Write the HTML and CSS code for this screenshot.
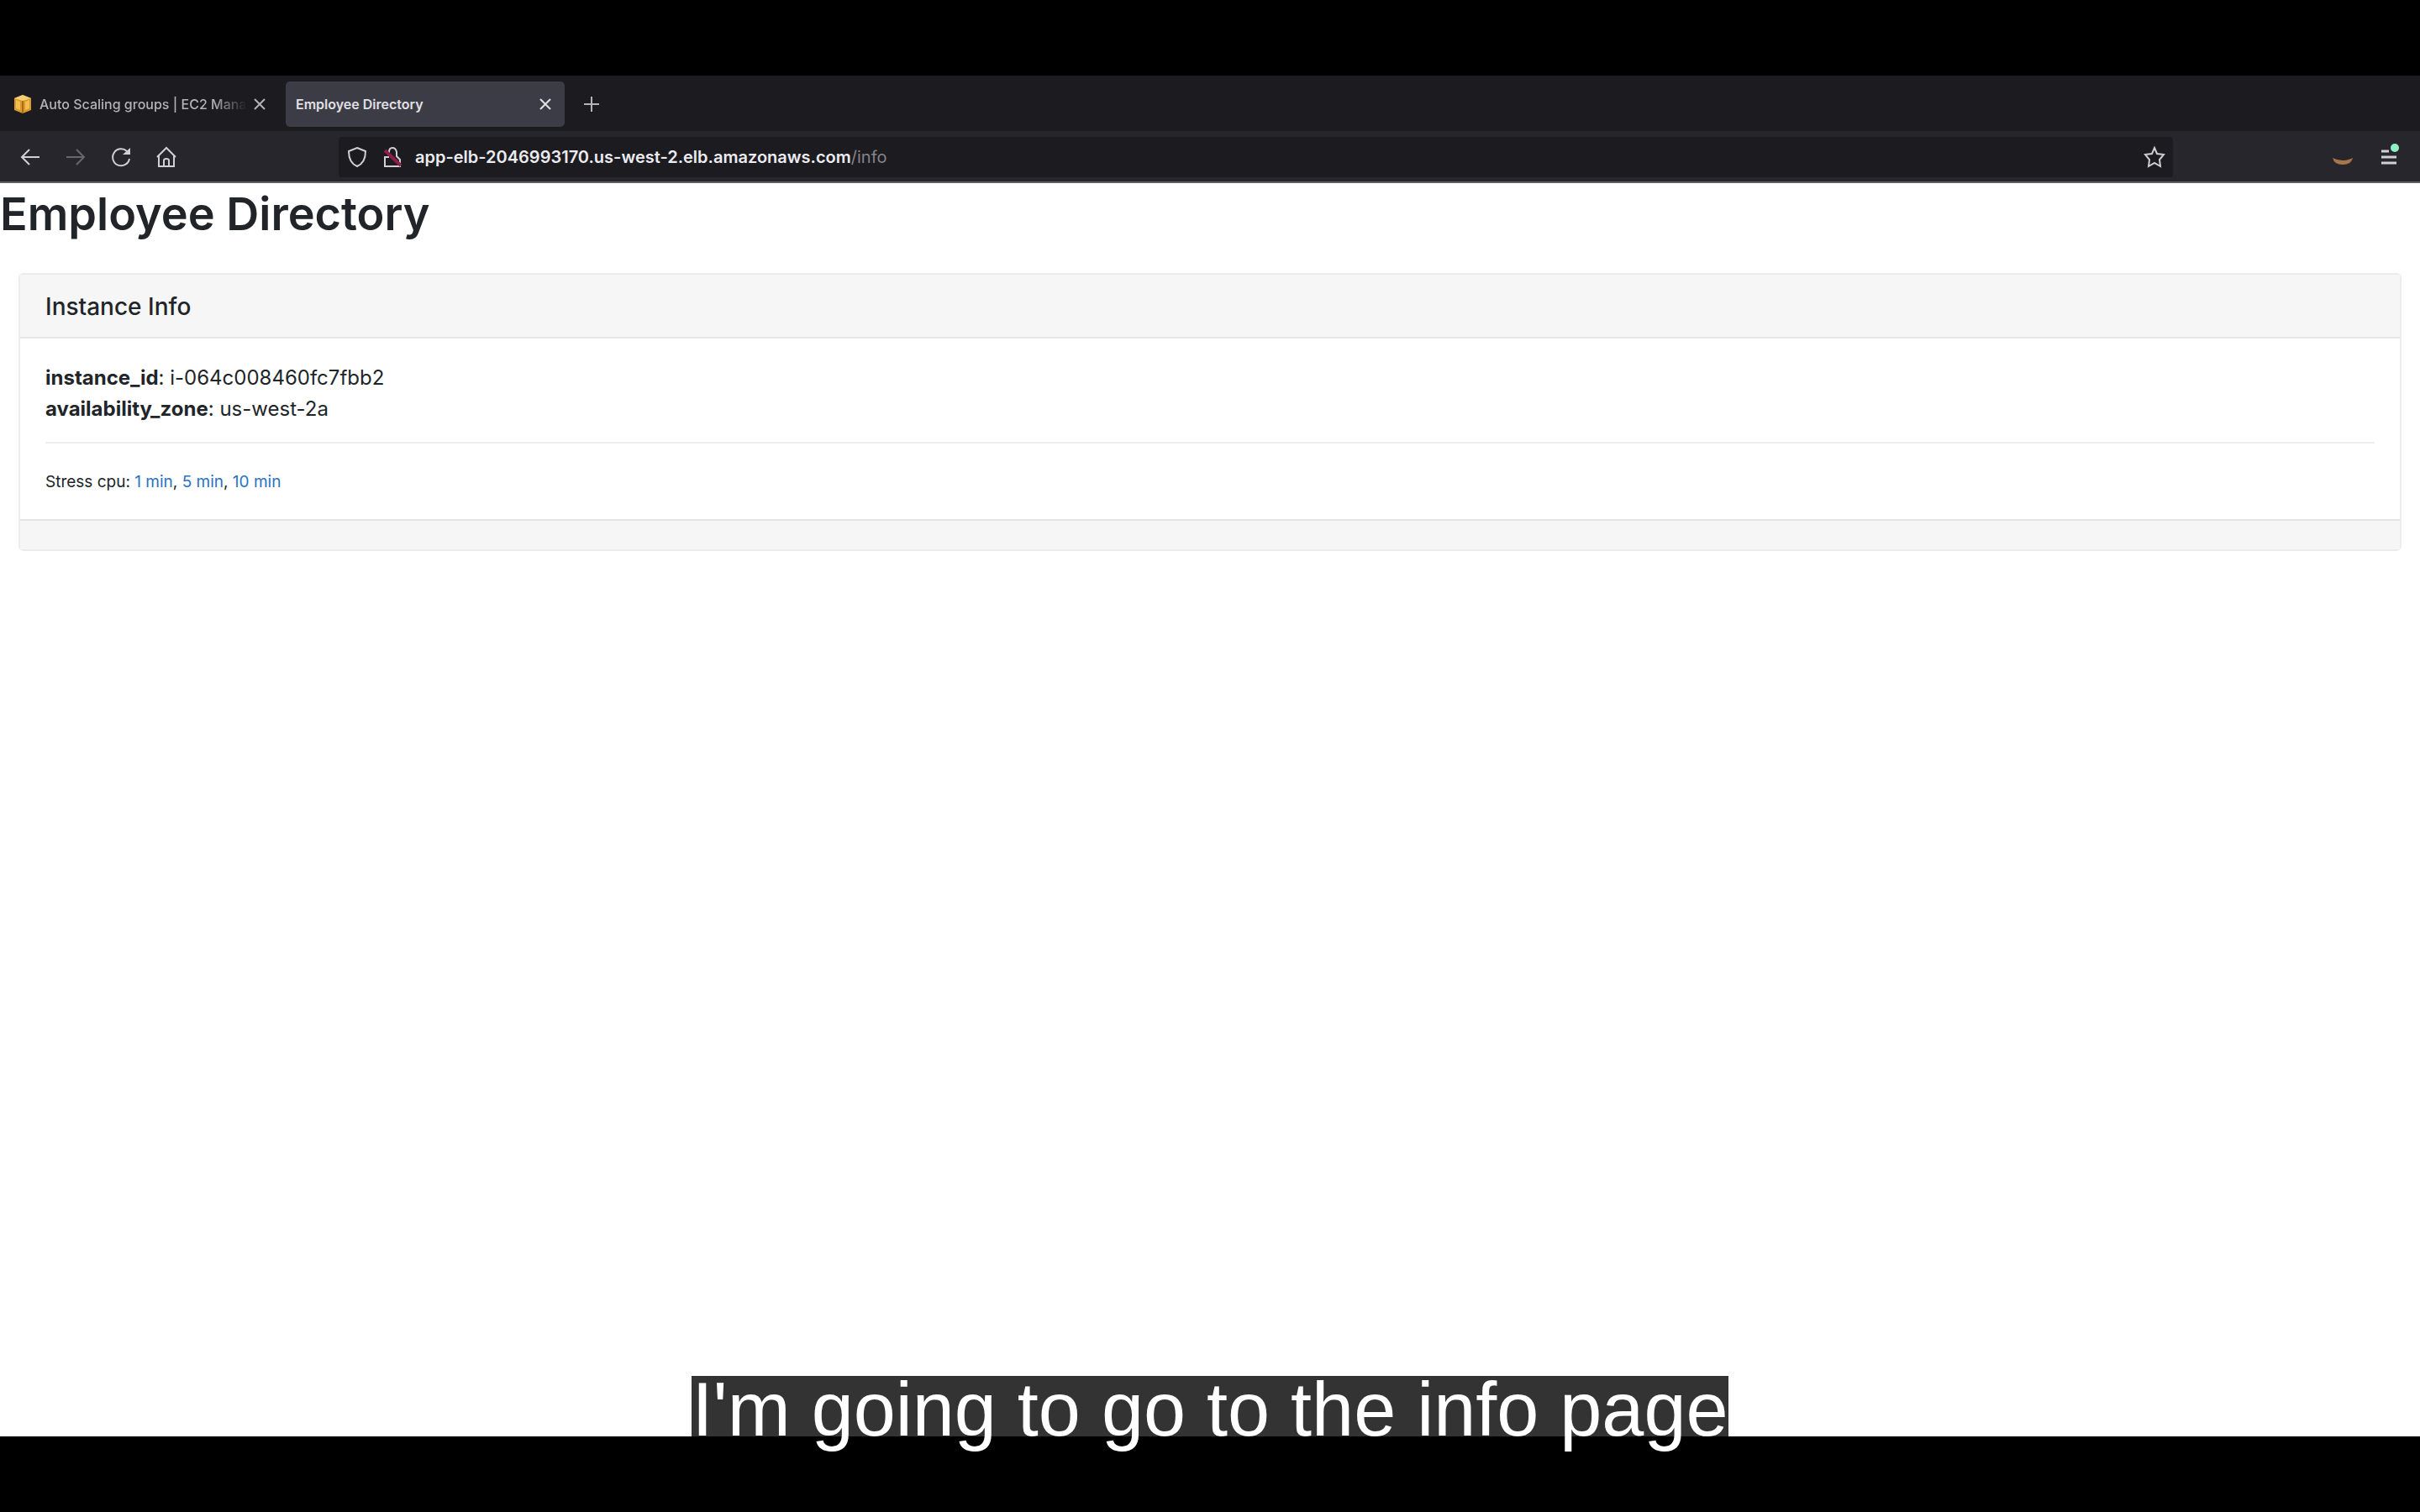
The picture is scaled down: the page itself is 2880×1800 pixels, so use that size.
FILE: index.html
```html
<!DOCTYPE html>
<html lang="en">
<head>
<meta charset="utf-8">
<title>Employee Directory</title>
<link rel="stylesheet" href="styles.css">
</head>
<body>
<div class="browser">
  <nav class="tabs" aria-label="Tabs">
    <div class="tab">
      <svg class="favicon" viewBox="0 0 24 24" aria-hidden="true"><path d="M12 1l10 4v14l-10 4-10-4V5z" fill="#d99a2b"/><path d="M12 1l10 4-10 3L2 5z" fill="#f6cf73"/><path d="M4 7l5 2v10l-5-2zM20 7l-5 2v10l5-2z" fill="#f3bd50"/><path d="M12 8v15" stroke="#a96d14" stroke-width="2"/></svg>
      <span class="tab-title">Auto Scaling groups | EC2 Mana</span>
      <button class="close" aria-label="Close tab"><svg viewBox="0 0 14 14"><path d="M1 1l12 12M13 1L1 13"/></svg></button>
    </div>
    <div class="tab active">
      <span class="tab-title">Employee Directory</span>
      <button class="close" aria-label="Close tab"><svg viewBox="0 0 14 14"><path d="M1 1l12 12M13 1L1 13"/></svg></button>
    </div>
    <button class="new-tab" aria-label="New tab"><svg viewBox="0 0 18 18"><path d="M9 0v18M0 9h18"/></svg></button>
  </nav>
  <div class="toolbar">
    <div class="history">
      <button aria-label="Back"><svg viewBox="0 0 24 24"><path d="M23 12H2M11 3l-9 9 9 9"/></svg></button>
      <button class="dim" aria-label="Forward"><svg viewBox="0 0 24 24"><path d="M1 12h21M13 3l9 9-9 9"/></svg></button>
      <button aria-label="Reload"><svg viewBox="0 0 24 24"><path d="M22 14a10 10 0 1 1-3-9"/><path d="M14 9h9V1z" fill="currentColor" stroke="none"/></svg></button>
      <button aria-label="Home"><svg viewBox="0 0 24 24"><path d="M1 12L12 1l11 11M3 10v13h18V10M9 22v-6q0-2 3-2t3 2v6"/></svg></button>
    </div>
    <div class="address">
      <svg class="shield" viewBox="0 0 24 24" aria-hidden="true"><path d="M12 1l10 4c0 9-3 15-10 18C5 20 2 14 2 5z"/></svg>
      <svg class="lock" viewBox="0 0 24 24" aria-hidden="true"><path d="M8 10V6q0-5 4-5t5 5v5l4 4v8H3V12h5"/><path d="M3 4l19 18" stroke="#8d1f42" stroke-width="4"/></svg>
      <span class="url"><b>app-elb-2046993170.us-west-2.elb.amazonaws.com</b>/info</span>
      <button class="bookmark" aria-label="Bookmark this page"><svg viewBox="0 0 24 24"><path d="M12 1l3 7 8 1-5 6 1 8-7-4-7 4 1-8-5-6 8-1z"/></svg></button>
    </div>
    <div class="extras">
      <button aria-label="Amazon"><svg viewBox="0 0 24 24"><path d="M0 13q12 6 24 0-2 8-12 8T0 13z" fill="#a8764a" stroke="none"/></svg></button>
      <button aria-label="Menu"><svg viewBox="0 0 24 24"><path d="M2 5h9M2 12h18M2 19h18" stroke-width="3"/><circle cx="18" cy="1" r="5" fill="#8ff0c5" stroke="none"/></svg></button>
    </div>
  </div>
  <main class="page">
    <h1>Employee Directory</h1>
    <section class="card">
      <h2 class="card-header">Instance Info</h2>
      <div class="card-body">
        <p><b>instance_id</b>: i-064c008460fc7fbb2<br><b>availability_zone</b>: us-west-2a</p>
        <hr>
        <p class="small">Stress cpu: <a href="#1">1 min</a>, <a href="#5">5 min</a>, <a href="#10">10 min</a></p>
      </div>
      <div class="card-footer"></div>
    </section>
  </main>
</div>
<div class="caption"><span>I'm going to go to the info page</span></div>
</body>
</html>
```
FILE: styles.css
```css
* { box-sizing: border-box; }
body {
  margin: 0;
  padding: 90px 0;
  min-height: 100vh;
  display: flex;
  flex-direction: column;
  background: #000;
  font-family: Inter, "Liberation Sans", sans-serif;
}
button {
  display: flex;
  padding: 0;
  border: 0;
  background: none;
  color: inherit;
}
svg {
  display: block;
  width: 24px;
  height: 24px;
  overflow: visible;
  fill: none;
  stroke: currentColor;
  stroke-width: 2;
}
.browser {
  flex: 1;
  display: flex;
  flex-direction: column;
  background: #fff;
}
.tabs {
  display: flex;
  align-items: center;
  height: 66px;
  padding-top: 2px;
  background: #1c1b20;
  color: #b4b3b8;
}
.tab {
  display: flex;
  align-items: center;
  width: 332px;
  height: 54px;
  margin-right: 8px;
  padding: 0 16px 0 15px;
  border-radius: 5px;
  font-size: 16px;
  font-weight: 500;
}
.tab.active {
  padding-left: 12px;
  background: #3c3c46;
  color: #e0e0e5;
  font-weight: 600;
}
.favicon { margin-right: 8px; stroke: none; }
.tab-title {
  flex: 1;
  min-width: 0;
  white-space: nowrap;
}
.tab:not(.active) .tab-title {
  -webkit-mask-image: linear-gradient(to left, transparent 8px, #000 48px);
  mask-image: linear-gradient(to left, transparent 8px, #000 48px);
}
.close svg { width: 14px; height: 14px; }
.new-tab { margin-left: 15px; }
.new-tab svg { width: 18px; height: 18px; }
.toolbar {
  display: flex;
  align-items: center;
  height: 62px;
  padding-top: 2px;
  border-bottom: 2px solid #5f5e62;
  background: #27262c;
  color: #d0cfd5;
}
.history {
  display: flex;
  gap: 30px;
  width: 403px;
  padding-left: 24px;
}
.dim { color: #68676d; }
.address {
  flex: 1;
  display: flex;
  align-items: center;
  height: 48px;
  padding: 0 10px;
  border-radius: 4px;
  background: #1c1b20;
}
.lock { margin: 0 15px 0 18px; }
.shield, .lock { flex: none; }
.url {
  flex: 1;
  color: #85848b;
  font-size: 20px;
}
.url b { color: #ececf0; font-weight: 600; }
.extras {
  display: flex;
  justify-content: flex-end;
  gap: 32px;
  width: 294px;
  padding-right: 24px;
}
.page { color: #212529; }
h1 {
  margin: 0;
  font-size: 54px;
  line-height: 74px;
  font-weight: 600;
}
.card {
  margin: 33px 22px 0;
  border: 2px solid #ececed;
  border-radius: 6px;
}
.card-header {
  margin: 0;
  padding: 19px 30px 17px;
  border-bottom: 2px solid #e7e7e8;
  background: #f6f6f7;
  font-size: 28px;
  line-height: 38px;
  font-weight: 500;
}
.card-body { padding: 28px 30px; }
.card-body p {
  margin: 0;
  font-size: 24px;
  line-height: 37px;
}
.card-body b { font-weight: 700; }
hr {
  margin: 21px 0 30px;
  border: 0;
  border-top: 2px solid #efefef;
}
.card-body .small { font-size: 19px; line-height: 32px; }
a { color: #2a72c4; text-decoration: none; }
.card-footer {
  height: 36px;
  border-top: 2px solid #e4e4e5;
  background: #f6f6f7;
}
.caption {
  position: absolute;
  left: 0;
  right: 0;
  bottom: 82px;
  display: flex;
  justify-content: center;
  color: #fff;
  font: 90px/80px "Liberation Sans", Arial, sans-serif;
}
.caption span { background: rgba(0, 0, 0, .8); }
```
